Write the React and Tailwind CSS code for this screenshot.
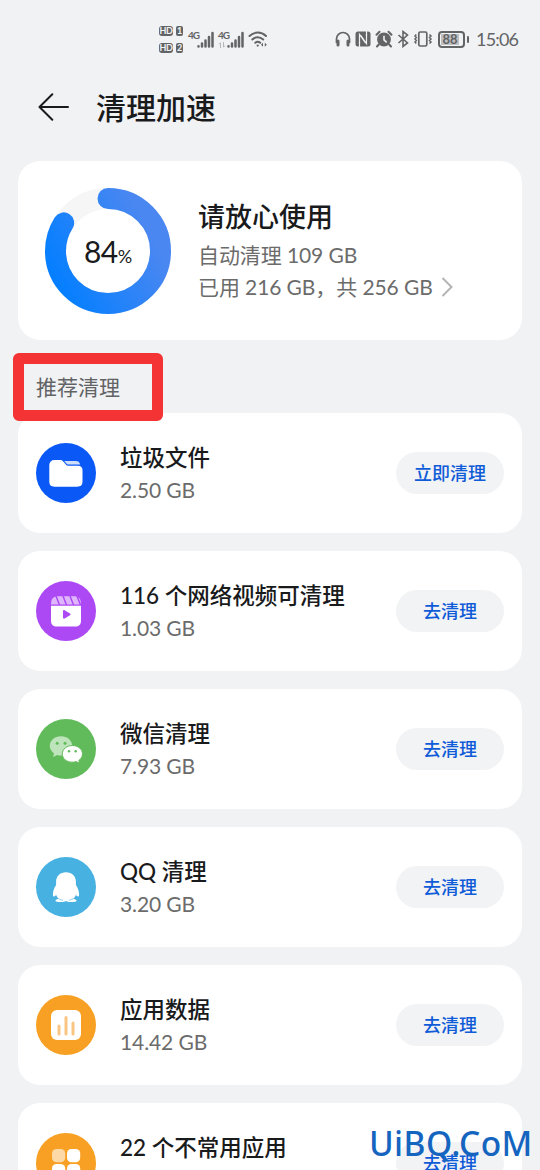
const FolderIcon = () => (
  <svg viewBox="0 0 60 60" className="size-15 shrink-0">
    <circle cx="30" cy="30" r="30" fill="#0a59f7" />
    <path
      d="M13.3 22a5 5 0 0 1 5-5h5.6c1.5 0 2.4.4 3.3 1.4l2.9 3.4c.5.6 1.100 1 2 1H42c3 0 4.500 1.600 4.500 4.500v11c0 3.800-1.700 5.400-5.400 5.400H18.700c-3.700 0-5.400-1.600-5.400-5.400z"
      fill="#fff"
    />
    <path d="M28.200 18h11.500c2.400 0 3.900 1.200 4.500 3.400H32.400c-.9 0-1.400-.3-2-1z" fill="#cfdefd" />
  </svg>
);

const VideoIcon = () => (
  <svg viewBox="0 0 60 60" className="size-15 shrink-0">
    <circle cx="30" cy="30" r="30" fill="#ac49f5" />
    <path d="M15 23.500c0-5.800 2.200-8.200 7.500-8.200h15c5.300 0 7.500 2.400 7.500 8.200z" fill="#dfb6fb" />
    <path d="M20 15l3.500 9M27 15l3.500 9M34 15l3.500 9M41 15l3.500 9" stroke="#ac49f5" strokeWidth="1.500" />
    <path d="M15 24.800h30v14.700c0 4-2 6-6 6H21c-4 0-6-2-6-6z" fill="#fff" />
    <path d="M27 30.200c0-1 .8-1.400 1.600-.9l5.400 3.200c.8.500.8 1.300 0 1.800l-5.400 3.200c-.8.500-1.600.1-1.600-.9z" fill="#ac49f5" />
  </svg>
);

const WechatIcon = () => (
  <svg viewBox="0 0 60 60" className="size-15 shrink-0">
    <circle cx="30" cy="30" r="30" fill="#62bb5b" />
    <path
      d="M25 17.200c-6.300 0-11.200 4.200-11.200 9.600 0 3.100 1.600 5.800 4.200 7.600l-.9 3.700 4-2.200c1.200.4 2.500.6 3.900.6 6.300 0 11.200-4.300 11.200-9.700S31.300 17.200 25 17.200z"
      fill="#bee4bb"
    />
    <path
      d="M36.400 26.500c5.700 0 10.100 3.700 10.100 8.400 0 2.700-1.500 5-3.700 6.500l.8 2.900-3.500-1.700c-1.200.4-2.400.6-3.700.6-5.700 0-10.100-3.700-10.100-8.300s4.400-8.400 10.100-8.400z"
      fill="#fff"
      stroke="#62bb5b"
      strokeWidth="1"
    />
    <g fill="#62bb5b">
      <circle cx="21.200" cy="24.300" r="1.500" />
      <circle cx="29" cy="24.300" r="1.500" />
      <circle cx="33" cy="32.200" r="1.200" />
      <circle cx="39.700" cy="32.200" r="1.200" />
    </g>
  </svg>
);

const QQIcon = () => (
  <svg viewBox="0 0 60 60" className="size-15 shrink-0">
    <circle cx="30" cy="30" r="30" fill="#47b1e1" />
    <path
      d="M30 15.200c-6 0-9.900 4-9.900 9.600v3.300c-2.300 3.400-3.200 6.700-3.200 9.300 0 1.500.5 2.300 1.200 2.100.6-.1 1.400-.8 2-1.700.5 1.500 1.100 2.700 2.200 3.900-1.800.6-2.900 1.300-2.900 2.100 0 1 2.700 1.300 5.400 1.300 2.200 0 4.200-.4 5.200-1 1 .6 3 1 5.200 1 2.700 0 5.400-.3 5.400-1.300 0-.8-1.100-1.500-2.900-2.100 1.100-1.200 1.700-2.400 2.200-3.900.6.900 1.400 1.600 2 1.700.7.200 1.200-.6 1.200-2.100 0-2.600-.9-5.900-3.200-9.300v-3.300c0-5.600-3.900-9.600-9.900-9.600z"
      fill="#fff"
    />
    <path d="M20.500 40.300c2.200 1.600 4.200 2.500 6.500 3M39.500 40.300c-2.200 1.600-4.200 2.500-6.500 3" stroke="#47b1e1" strokeWidth=".6" fill="none" />
  </svg>
);

const ChartIcon = () => (
  <svg viewBox="0 0 60 60" className="size-15 shrink-0">
    <circle cx="30" cy="30" r="30" fill="#f7a023" />
    <rect x="15" y="15" width="30" height="30" rx="6" fill="#fff" />
    <path d="M23 31v8M30 22.500V39M37 28v11" stroke="#f9c581" strokeWidth="3" strokeLinecap="round" />
  </svg>
);

const AppsIcon = () => (
  <svg viewBox="0 0 60 60" className="size-15 shrink-0">
    <circle cx="30" cy="30" r="30" fill="#f7a023" />
    <rect x="16" y="16" width="13.200" height="13.200" rx="4.500" fill="#fcd9a7" />
    <g fill="#fff">
      <rect x="31" y="16" width="13.200" height="13.200" rx="4.500" />
      <rect x="16" y="31" width="13.200" height="13.200" rx="4.500" />
      <rect x="31" y="31" width="13.200" height="13.200" rx="4.500" />
    </g>
  </svg>
);

const items = [
  { title: "垃圾文件", size: "2.50 GB", action: "立即清理", Icon: FolderIcon },
  { title: "116 个网络视频可清理", size: "1.03 GB", action: "去清理", Icon: VideoIcon },
  { title: "微信清理", size: "7.93 GB", action: "去清理", Icon: WechatIcon },
  { title: "QQ 清理", size: "3.20 GB", action: "去清理", Icon: QQIcon },
  { title: "应用数据", size: "14.42 GB", action: "去清理", Icon: ChartIcon },
  { title: "22 个不常用应用", action: "去清理", Icon: AppsIcon },
];

const HdBadge = ({ sim }) => (
  <div className="flex gap-[3px] text-[9px] leading-[10px] font-bold text-[#f1f2f4]">
    <span className="w-[14px] h-[10px] rounded-[3px] bg-[#636466] text-center tracking-[-0.3px]">HD</span>
    <span className="w-[7px] h-[10px] rounded-[2px] bg-[#636466] text-center">{sim}</span>
  </div>
);

const Signal = ({ data }) => (
  <div className="flex">
    <div className="w-[9px] text-[10px] leading-[9px] font-bold tracking-[-1px] flex flex-col">
      4G
      {data && (
        <svg viewBox="0 0 8 6" className="w-2 h-[6px] mt-[2px]" fill="none" stroke="#b5b6b8" strokeWidth="1">
          <path d="M2.500 6V.8L1 2.300M5.500 0v5.200L7 3.700" />
        </svg>
      )}
    </div>
    <svg viewBox="0 0 17 17" className="size-[17px]" stroke="#636466" strokeWidth="2.500" strokeLinecap="round">
      <path d="M1.500 15.300v.2M5 12.500v3M8.500 9.500v6M12 6v9.500M15.500 2v13.500" />
    </svg>
  </div>
);

const StatusBar = () => (
  <div className="h-[76px] shrink-0 pt-[2px] pl-[159px] pr-[22px] flex items-center justify-between text-[#636466]">
    <div className="flex items-center">
      <div className="flex flex-col gap-[7px]">
        <HdBadge sim="1" />
        <HdBadge sim="2" />
      </div>
      <div className="flex gap-1 ml-[5px] mr-1">
        <Signal />
        <Signal data />
      </div>
      <svg viewBox="0 0 20 18" className="w-5 h-[18px]" fill="none" stroke="#636466" strokeWidth="2" strokeLinecap="round">
        <path d="M1.500 6c4.800-4.600 11.700-4.600 16.500 0M4.300 9.500c3.200-3 7.700-3 10.900 0M7.300 12.800c1.500-1.300 3.400-1.300 4.900 0" />
        <circle cx="9.700" cy="15.600" r="1.100" fill="#636466" stroke="none" />
        <path d="M15 12.800v4l-2-2zM16.800 12.800v4l2-2z" fill="#636466" stroke="none" />
      </svg>
    </div>
    <div className="flex items-center">
      <svg viewBox="0 0 16 16" className="size-4" fill="none" stroke="#636466" strokeWidth="1.700">
        <path d="M1.500 12V8a6.500 6.500 0 0 1 13 0v4" />
        <path d="M3 10v4M13 10v4" strokeWidth="3" strokeLinecap="round" />
      </svg>
      <svg viewBox="0 0 16 16" className="size-4 ml-1">
        <rect x=".5" y=".5" width="15" height="15" rx="2.500" fill="#636466" />
        <path d="M4.500 13V3.500l6 8.500M11.500 3v9.500l-6-8.500" fill="none" stroke="#f1f2f4" strokeWidth="1.200" />
        <path d="M4.500 11v5M11.500 0v5" stroke="#f1f2f4" strokeWidth="1.200" />
      </svg>
      <svg viewBox="0 0 18 18" className="size-[18px] ml-1">
        <circle cx="9" cy="9.500" r="6.900" fill="#636466" />
        <path d="M1.500 4.800l3-3M16.500 4.800l-3-3M3.800 14.500L2 16.500M14.200 14.500l1.800 2" stroke="#636466" strokeWidth="2" strokeLinecap="round" />
        <path d="M9 5.800v4l2.700 2.500" fill="none" stroke="#f1f2f4" strokeWidth="1.600" />
      </svg>
      <svg viewBox="0 0 12 18" className="w-3 h-[18px] ml-1" fill="none" stroke="#636466" strokeWidth="1.600">
        <path d="M1.500 5l9 8L6 16.500v-15L10.500 5l-9 8" />
      </svg>
      <svg viewBox="0 0 20 16" className="w-5 h-4 ml-1" fill="none" stroke="#636466" strokeWidth="1.700">
        <rect x="5.800" y="1" width="8" height="14" rx="1.500" />
        <path d="M3.300 3.500L2 5l1.300 1.500L2 8l1.300 1.500L2 11l1.300 1.500M16.500 3.500L18 5l-1.500 1.500L18 8l-1.500 1.500L18 11l-1.500 1.500" strokeWidth="1.500" />
      </svg>
      <div className="ml-[5px] flex items-center gap-[2px]">
        <div className="w-[27px] h-[17px] rounded-[4px] border-2 border-[#636466] p-[1px]">
          <div className="h-full w-[18px] bg-[#bebfc1] text-[13px] leading-[11px] font-bold text-center">88</div>
        </div>
        <div className="w-[2px] h-[7px] bg-[#636466] rounded-sm" />
      </div>
      <span className="ml-[7px] text-[18px] leading-5 w-[42px] whitespace-nowrap tracking-[-0.8px]">15:06</span>
    </div>
  </div>
);

const UsageCard = () => (
  <div className="mx-[18px] h-[179px] shrink-0 rounded-[22px] bg-white flex items-center pl-[27px]">
    <div className="relative size-[126px] shrink-0">
      <svg viewBox="0 0 126 126" className="size-full -rotate-90">
        <defs>
          <linearGradient id="usage" gradientUnits="userSpaceOnUse" x1="95" y1="100" x2="45" y2="5">
            <stop offset="0" stopColor="#4b87f1" />
            <stop offset="1" stopColor="#057fff" />
          </linearGradient>
        </defs>
        <circle cx="63" cy="63" r="52.500" fill="none" stroke="#f6f6f6" strokeWidth="21" />
        <circle
          cx="63"
          cy="63"
          r="52.500"
          fill="none"
          stroke="url(#usage)"
          strokeWidth="21"
          strokeLinecap="round"
          pathLength="100"
          strokeDasharray="84 100"
        />
      </svg>
      <div className="absolute inset-0 flex items-baseline justify-center pt-[43px] text-[#191a1c]">
        <span className="text-[30px] leading-10 tracking-[-0.5px]">84</span>
        <span className="text-[18px]">%</span>
      </div>
    </div>
    <div className="ml-[27px]">
      <h2 className="text-[27px] leading-9 font-medium text-[#191a1c]">请放心使用</h2>
      <p className="mt-1 text-[21px] leading-8 text-[#6b6b6b] tracking-[-0.1px]">自动清理 109 GB</p>
      <p className="text-[21px] leading-8 text-[#6b6b6b] tracking-[-0.1px] flex items-center">
        已用 216 GB，共 256 GB
        <svg viewBox="0 0 12 20" className="w-3 h-5 ml-[8px]" fill="none" stroke="#b4b4b4" strokeWidth="2">
          <path d="M1.500 1l9 9-9 9" />
        </svg>
      </p>
    </div>
  </div>
);

const CleanItem = ({ title, size, action, Icon }) => (
  <div className="h-[120px] shrink-0 rounded-[22px] bg-white px-[18px] flex items-center">
    <Icon />
    <div className="ml-6 flex-1">
      <h3 className="text-[22.500px] leading-8 pt-px font-medium text-[#191a1c] whitespace-nowrap">{title}</h3>
      <p className="h-8 text-[21px] leading-8 text-[#6b6b6b] tracking-[-0.1px]">{size}</p>
    </div>
    <button className="w-[108px] h-[42px] rounded-full bg-[#f2f3f4] text-[18px] font-medium text-[#0f5bd8]">{action}</button>
  </div>
);

const App = () => {
  return (
    <div className="relative w-full h-[1170px] overflow-hidden bg-[#f1f2f4] flex flex-col font-['Lato','Noto_Sans_CJK_SC',sans-serif]">
      <StatusBar />
      <header className="h-[85px] shrink-0 pl-[38px] pb-[24px] flex items-center">
        <svg viewBox="0 0 32 28" className="w-8 h-7" fill="none" stroke="#191a1c" strokeWidth="2" strokeLinecap="round" strokeLinejoin="round">
          <path d="M30 14H1.500M14.300 1.300L1.500 14l12.800 12.700" />
        </svg>
        <h1 className="ml-[26px] text-[30px] leading-10 font-medium text-[#191a1c]">清理加速</h1>
      </header>
      <UsageCard />
      <div className="relative z-10 h-[73px] shrink-0 pt-[13px] pl-[13px]">
        <div className="w-[150px] h-[68px] rounded-[6px] border-[11px] border-[#f43434] flex items-center pl-3">
          <span className="text-[21px] leading-8 text-[#626365]">推荐清理</span>
        </div>
      </div>
      <div className="px-[18px] flex flex-col gap-[18px]">
        {items.map((item) => (
          <CleanItem key={item.title} {...item} />
        ))}
      </div>
      <div className="absolute left-[369px] top-[1121px] text-[33.500px] leading-[44px] tracking-[0.4px] font-medium text-[#1565c0] whitespace-nowrap font-['Noto_Sans',sans-serif]">
        UiBQ.CoM
      </div>
    </div>
  );
};

export default App;
